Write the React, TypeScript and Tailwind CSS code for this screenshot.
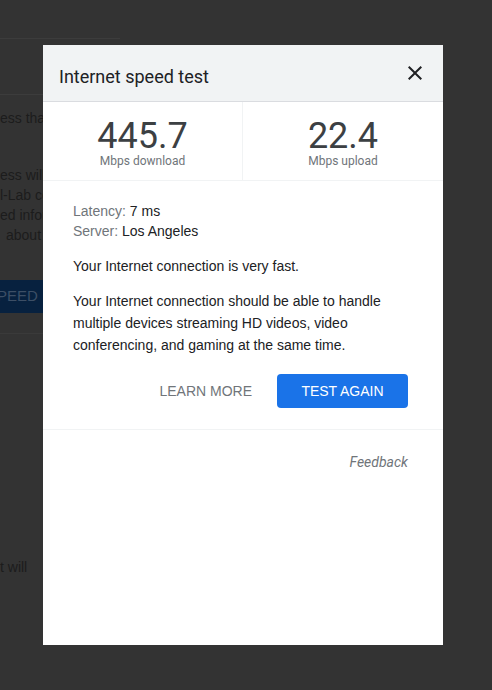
import React from 'react';

// Material-style close glyph (24px box, 14px cross)
function CloseIcon() {
  return (
    <svg width="24" height="24" viewBox="0 0 24 24" fill="#202124">
      <path d="M19 6.41L17.59 5 12 10.59 6.41 5 5 6.41 10.59 12 5 17.59 6.41 19 12 13.41 17.59 19 19 17.59 13.41 12z" />
    </svg>
  );
}

const results = [
  { value: '445.7', label: 'Mbps download' },
  { value: '22.4', label: 'Mbps upload' },
];

export default function App() {
  return (
    <div className="relative h-[690px] w-[492px] overflow-hidden bg-[#333333] font-['Liberation_Sans',Arial,sans-serif]">

      {/* --- dimmed page behind the dialog --- */}
      <div className="w-[130px] text-[14px] text-[#1c1c1c] whitespace-nowrap">
        <div className="h-[39px] w-[120px] border-b border-[#3c3c3c]" />
        <div className="h-[56px] border-b border-[#3c3c3c]" />
        <p className="mt-[13px] leading-5">ess than</p>
        <div className="mt-[37px] leading-5">
          <p>ess will</p>
          <p>l-Lab co</p>
          <p>ed infor</p>
          <p className="pl-[6px]">about</p>
        </div>
        <div className="mt-[35px] flex h-[33px] items-center bg-[#07213f] text-[15px] text-[#3d4f66]">
          <span className="-ml-[3px]">PEED</span>
        </div>
        <div className="mt-5 border-t border-[#3a3a3a]" />
        <p className="mt-[223px] leading-5">t will</p>
      </div>

      {/* --- dialog --- */}
      <div className="absolute left-[43px] top-[45px] flex h-[600px] w-[400px] flex-col bg-white">

        {/* Header */}
        <div className="flex h-[57px] shrink-0 items-center justify-between border-b border-[#dadce0] bg-[#f1f3f4] pl-4 pr-4">
          <h2 className="pt-[6px] font-['Roboto',sans-serif] text-[18px] text-[#202124]">Internet speed test</h2>
          <button className="flex items-center justify-center">
            <CloseIcon />
          </button>
        </div>

        {/* Results */}
        <div className="flex h-[79px] shrink-0 border-b border-[#f1f3f4] font-['Roboto',sans-serif]">
          {results.map((r, i) => (
            <div
              key={r.label}
              className={
                i === 0
                  ? 'w-[200px] border-r border-[#f1f3f4] pt-4 text-center'
                  : 'flex-1 pt-4 text-center'
              }
            >
              <div className="text-[36px] leading-[36px] text-[#3c4043]">{r.value}</div>
              <div className="text-[12px] leading-[14px] text-[#70757a]">{r.label}</div>
            </div>
          ))}
        </div>

        {/* Body */}
        <div className="shrink-0 border-b border-[#f1f3f4] pb-[21px] pl-[30px] pr-[35px] pt-5 text-[14px] text-[#202124]">
          <div className="leading-5">
            <p>
              <span className="text-[#70757a]">Latency: </span>7 ms
            </p>
            <p>
              <span className="text-[#70757a]">Server: </span>Los Angeles
            </p>
          </div>
          <p className="mt-[14px] leading-[22px]">Your Internet connection is very fast.</p>
          <p className="mt-[13px] leading-[22px]">
            Your Internet connection should be able to handle multiple devices streaming HD videos, video
            conferencing, and gaming at the same time.
          </p>
          <div className="mt-[18px] flex items-center justify-end gap-px">
            <button className="h-[34px] px-6 text-[14px] text-[#70757a]">LEARN MORE</button>
            <button className="h-[34px] w-[131px] rounded bg-[#1a73e8] text-[14px] text-white">
              TEST AGAIN
            </button>
          </div>
        </div>

        {/* Footer */}
        <div className="pr-[35px] pt-5 text-right">
          <span className="font-['Roboto',sans-serif] text-[14px] italic leading-5 text-[#70757a]">Feedback</span>
        </div>
      </div>
    </div>
  );
}
